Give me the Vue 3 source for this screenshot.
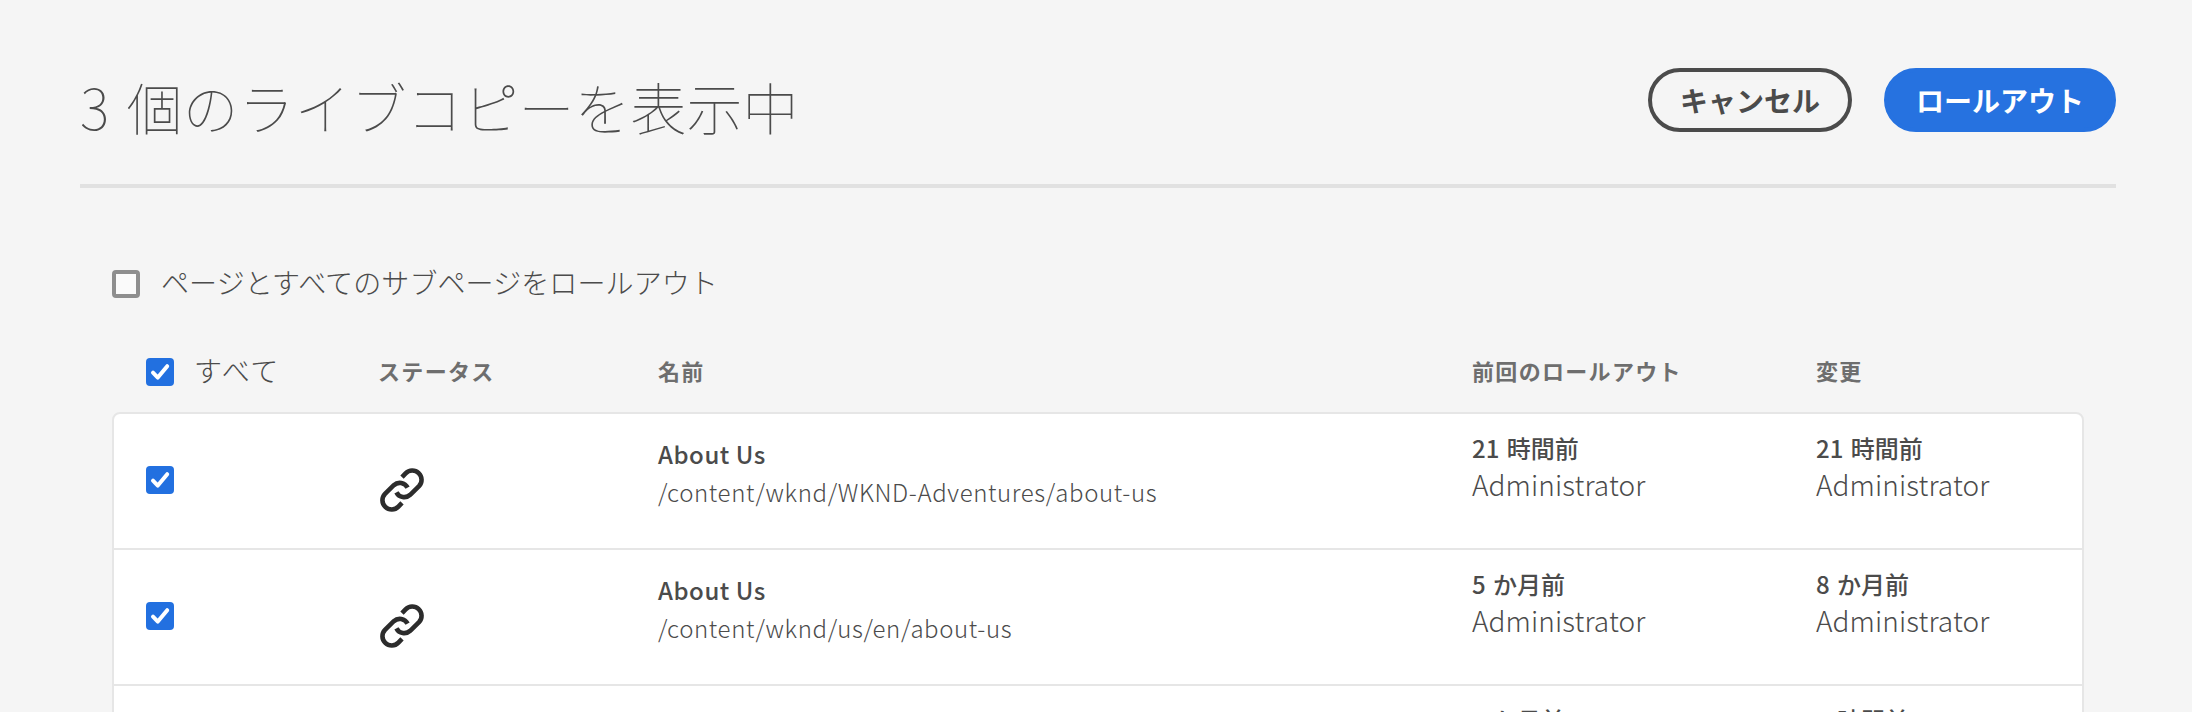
<script setup>
const rows = [
  { name: 'About Us', path: '/content/wknd/WKND-Adventures/about-us', rolled: '21 時間前', modified: '21 時間前', user: 'Administrator' },
  { name: 'About Us', path: '/content/wknd/us/en/about-us', rolled: '5 か月前', modified: '8 か月前', user: 'Administrator' },
  { rolled: '5 か月前', modified: '4 時間前' },
]
</script>

<template>
  <main class="page">
    <header class="top">
      <h1>3 個のライブコピーを表示中</h1>
      <div class="actions">
        <button class="btn">キャンセル</button>
        <button class="btn cta">ロールアウト</button>
      </div>
    </header>

    <div class="subpages">
      <span class="box"></span>
      <span class="label">ページとすべてのサブページをロールアウト</span>
    </div>

    <div class="grid heads">
      <div class="all">
        <span class="box checked">
          <svg viewBox="0 0 28 28"><path d="M7 14.6l4.8 5L21.2 8.2" /></svg>
        </span>
        <span class="label">すべて</span>
      </div>
      <div class="head">ステータス</div>
      <div class="head">名前</div>
      <div class="head">前回のロールアウト</div>
      <div class="head">変更</div>
    </div>

    <section class="table">
      <div v-for="(r, i) in rows" :key="i" class="grid row">
        <div class="check">
          <span class="box checked">
            <svg viewBox="0 0 28 28"><path d="M7 14.6l4.8 5L21.2 8.2" /></svg>
          </span>
        </div>
        <div class="status">
          <svg viewBox="0 0 44 44">
            <path d="M22 9.2L25.6 5.4A8.7 8.7 0 0 1 39 18.2L30.2 26.8A8.8 8.8 0 0 1 16.4 24.4" />
            <path d="M22 34.8L18.4 38.6A8.7 8.7 0 0 1 5 25.8L13.8 17.2A8.8 8.8 0 0 1 27.6 19.6" />
          </svg>
        </div>
        <div class="name">
          <template v-if="r.name">
            <strong>{{ r.name }}</strong>
            <span>{{ r.path }}</span>
          </template>
        </div>
        <div class="when">
          <strong>{{ r.rolled }}</strong>
          <span v-if="r.user">{{ r.user }}</span>
        </div>
        <div class="when">
          <strong>{{ r.modified }}</strong>
          <span v-if="r.user">{{ r.user }}</span>
        </div>
      </div>
    </section>
  </main>
</template>

<style>
html,
body {
  margin: 0;
  overflow: hidden;
  background: #f5f5f5;
}
</style>

<style scoped>
.page {
  box-sizing: border-box;
  height: 712px;
  padding: 0 76px 0 80px;
  overflow: hidden;
  background: #f5f5f5;
  color: #4b4b4b;
  font-family: "Noto Sans CJK JP", sans-serif;
}
.top {
  box-sizing: border-box;
  display: flex;
  justify-content: space-between;
  height: 188px;
  padding-top: 68px;
  border-bottom: 4px solid #e1e1e1;
}
h1 {
  margin: 0;
  font-size: 56px;
  font-weight: 100;
  line-height: 76px;
  word-spacing: 5px;
}
.actions {
  display: flex;
  gap: 32px;
}
.btn {
  box-sizing: border-box;
  height: 64px;
  padding: 0 28px 1px;
  border: 4px solid #4b4b4b;
  border-radius: 32px;
  background: transparent;
  color: #4b4b4b;
  font: 700 28px/54px "Noto Sans CJK JP", sans-serif;
}
.cta {
  border-color: #2672e0;
  background: #2672e0;
  color: #fff;
}
.box {
  box-sizing: border-box;
  display: block;
  flex: none;
  width: 28px;
  height: 28px;
  border: 4px solid #8e8e8e;
  border-radius: 4px;
  background: #fafafa;
}
.checked {
  border: 0;
  background: #2270e0;
}
.checked svg {
  display: block;
}
.checked path {
  fill: none;
  stroke: #fff;
  stroke-width: 4;
  stroke-linecap: round;
  stroke-linejoin: round;
}
.subpages {
  display: flex;
  gap: 21px;
  height: 28px;
  margin: 82px 0 0 32px;
}
.label {
  font-size: 28px;
  font-weight: 300;
  line-height: 25px;
  letter-spacing: 0.1px;
}
.grid {
  display: grid;
  grid-template-columns: 232px 280px 814px 344px 1fr;
}
.heads {
  height: 28px;
  margin: 60px 32px 26px 66px;
}
.head {
  color: #6e6e6e;
  font-size: 22px;
  font-weight: 700;
  line-height: 24px;
  letter-spacing: 1.32px;
}
.all {
  display: flex;
  gap: 20px;
}
.all .label {
  letter-spacing: 1.68px;
}
.table {
  margin: 0 32px;
  border: 2px solid #e6e6e6;
  border-radius: 8px;
  background: #fff;
}
.row {
  height: 134px;
  padding-left: 32px;
  border-bottom: 2px solid #e6e6e6;
}
.check {
  padding-top: 52px;
}
.status {
  padding: 54px 0 0 2px;
}
.status svg {
  display: block;
  width: 44px;
  height: 44px;
}
.status path {
  fill: none;
  stroke: #2c2c2c;
  stroke-width: 4.6;
}
.name,
.when {
  display: flex;
  flex-direction: column;
  white-space: nowrap;
}
.name {
  padding-top: 21px;
}
strong {
  font-size: 24px;
  font-weight: 500;
  line-height: 38px;
}
.name strong {
  letter-spacing: 0.55px;
}
.name span {
  font-size: 24px;
  font-weight: 300;
  line-height: 38px;
  letter-spacing: 0.62px;
}
.when {
  padding-top: 15px;
}
.when strong {
  word-spacing: 2px;
}
.when span {
  font-size: 28px;
  font-weight: 300;
  line-height: 35px;
  letter-spacing: 0.1px;
}
</style>
